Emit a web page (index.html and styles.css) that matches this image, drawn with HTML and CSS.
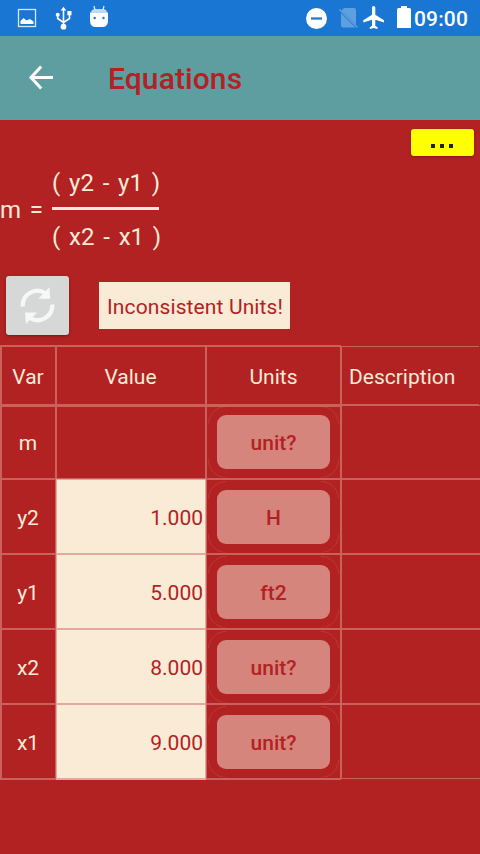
FILE: index.html
```html
<!DOCTYPE html>
<html lang="en">
<head>
<meta charset="utf-8">
<title>Equations</title>
<link rel="stylesheet" href="styles.css">
</head>
<body>
<header class="status">
  <svg class="status-icons" width="120" height="36" viewBox="0 0 120 36">
    <rect x="18.500" y="9.500" width="17" height="17" fill="none" stroke="#d6e7f8" stroke-width="1.300"/>
    <path d="M20.500 24v-3l3-3 3 2.500 3.500-1.500 3.500 2.500v2.500z" fill="#fff"/>
    <g fill="none" stroke="#fff" stroke-width="1.600"><path d="M63.500 10v15M57.700 15v3.500l5.800 4M69.500 14.500v4l-6 4"/></g>
    <path d="M60.700 10.500l2.800-3.800 2.800 3.800zM67.300 11h4.200v4.200h-4.200z" fill="#fff"/>
    <circle cx="57.700" cy="14.700" r="2" fill="#fff"/><circle cx="63.500" cy="26.700" r="2.900" fill="#fff"/>
    <path d="M90 12.500q9-1 18 0v8q0 6.500-5 6.500h-8q-5 0-5-6.500z" fill="#fff"/>
    <path d="M91 13q0-4 4.500-4h7q4.500 0 4.500 4z" fill="#bdd8f3"/>
    <path d="M95 10l-1-4M103 10l1-4" stroke="#e4effa" stroke-width="1.200"/>
    <circle cx="94.700" cy="18" r="1.200" fill="#1976d2"/><circle cx="103.500" cy="18" r="1.200" fill="#1976d2"/>
  </svg>
  <div class="status-right">
    <svg width="112" height="36" viewBox="302 0 112 36">
      <circle cx="316.500" cy="18.500" r="10.500" fill="#fff"/><path d="M311 18.500h11" stroke="#1976d2" stroke-width="2.200"/>
      <path d="M344 8h10q2 0 2 2v15L341.500 10.500zM341 13l14.500 14.500H343q-2 0-2-2z" fill="#5e9fdf"/>
      <path d="M339.500 9.500l18 18" stroke="#5e9fdf" stroke-width="1.400"/>
      <path d="M384 22.400v-2.200l-8.700-5.400v-7.200a1.650 1.650 0 0 0-3.300 0v7.200l-8.700 5.400v2.200l8.700-2.700v6l-2.200 1.600V29l3.850-1.100L377.500 29v-1.700l-2.200-1.600v-6z" fill="#fff"/>
      <path d="M398.500 8h2.500V6h6v2h2.500q1.500 0 1.500 1.500V28h-14V9.500q0-1.500 1.500-1.500z" fill="#fff"/>
    </svg>
    <span class="clock">09:00</span>
  </div>
</header>
<div class="appbar">
  <svg class="back" width="26" height="26" viewBox="0 0 26 26"><path d="M13.200 1.500L3 12.500l10.200 11M3 12.500H25" fill="none" stroke="#fff" stroke-width="3"/></svg>
  <h1>Equations</h1>
</div>
<main>
  <div class="menu-row">
    <button class="more"><i></i><i></i><i></i></button>
  </div>
  <div class="equation">
    <span class="lhs">m&nbsp; =</span>
    <div class="fraction">
      <span class="top">(&nbsp; y2 &nbsp;-&nbsp; y1 &nbsp;)</span>
      <span class="bottom">(&nbsp; x2 &nbsp;-&nbsp; x1 &nbsp;)</span>
    </div>
  </div>
  <div class="actions">
    <button class="refresh">
      <svg width="36" height="38" viewBox="20 286.500 36 38">
        <path d="M22.800 306A14.600 14.600 0 0 1 45 292.500M52.200 304A14.600 14.600 0 0 1 30 317.500" fill="none" stroke="#f7f7f7" stroke-width="4.300"/>
        <path d="M49.500 286.700l.7 11.500H38.300zM25 312h12l-11 11.500z" fill="#f7f7f7"/>
      </svg>
    </button>
    <span class="message">Inconsistent Units!</span>
  </div>
  <div class="table">
    <div class="row head"><div>Var</div><div>Value</div><div>Units</div><div class="desc">Description</div></div>
    <div class="row first"><div>m</div><div></div><div><button class="unit">unit?</button></div><div class="desc"></div></div>
    <div class="row"><div>y2</div><div class="value">1.000</div><div><button class="unit">H</button></div><div class="desc"></div></div>
    <div class="row"><div>y1</div><div class="value">5.000</div><div><button class="unit">ft2</button></div><div class="desc"></div></div>
    <div class="row"><div>x2</div><div class="value">8.000</div><div><button class="unit">unit?</button></div><div class="desc"></div></div>
    <div class="row last"><div>x1</div><div class="value">9.000</div><div><button class="unit">unit?</button></div><div class="desc"></div></div>
  </div>
</main>
</body>
</html>
```
FILE: styles.css
```css
* { box-sizing: border-box; }
body {
  margin: 0;
  height: 854px;
  overflow: hidden;
  background: #b22222;
  color: #faebd7;
  font: 21px/25px Roboto, sans-serif;
}
button { border: 0; padding: 0; font: inherit; color: inherit; }
svg { display: block; flex: none; }
.status { display: flex; justify-content: space-between; height: 36px; background: #1976d2; color: #fff; }
.status-right { display: flex; width: 178px; }
.clock { font-size: 21px; font-weight: 500; line-height: 38px; letter-spacing: .15px; }
.appbar { display: flex; align-items: center; height: 84px; padding-left: 28px; background: #5f9ea0; }
.appbar h1 { margin: 2px 0 0 54px; font-size: 30px; line-height: 36px; font-weight: 500; letter-spacing: .1px; color: #b22222; }
.menu-row { display: flex; justify-content: flex-end; padding: 9px 6px 0; height: 47px; }
.more {
  display: flex; justify-content: center; align-items: flex-start; gap: 5px;
  width: 63px; height: 27px; padding: 15px 1px 0 0;
  background: #ff0; border-radius: 3px; box-shadow: 0 1px 3px rgba(0,0,0,.25);
}
.more i { width: 4px; height: 4px; background: #222200; }
.equation { display: flex; height: 109px; font-size: 24px; word-spacing: -1.55px; }
.lhs { width: 52px; padding-top: 31px; white-space: nowrap; }
.fraction { display: flex; flex-direction: column; align-items: flex-start; white-space: nowrap; }
.top { width: 107px; height: 43px; padding-top: 4px; border-bottom: 3px solid #faebd7; }
.bottom { padding-top: 15px; }
.actions { display: flex; height: 69px; padding-left: 6px; gap: 30px; }
.refresh {
  display: flex; align-items: center; justify-content: center;
  width: 63px; height: 59px; border-radius: 3px;
  background: #d6d7d7; box-shadow: 0 1px 3px rgba(0,0,0,.35);
}
.message { width: 191px; height: 47px; margin-top: 6px; padding: 13px 8px; background: #faebd7; color: #b22222; white-space: nowrap; letter-spacing: .12px; }
.row { display: grid; grid-template-columns: 56px 150px 135px 139px; height: 75px; }
.row > div {
  display: flex; align-items: center; justify-content: center;
  padding: 3px 1px 0 0;
  border: 1px solid rgba(214,133,124,.65);
}
.row > div:first-child { border-left-width: 2px; }
.row > div:nth-child(3) { padding: 0; }
.row > .desc { border-right: 0; }
.row > .value { justify-content: flex-end; padding-right: 2px; background: #faebd7; color: #b22222; }
.row.head { height: 60px; }
.row.head > div { border-top-width: 2px; padding-top: 3px; }
.row.head > .desc { justify-content: flex-start; padding-left: 7px; margin: 1px 1px 0 0; border-top-width: 1px; }
.row.first { height: 74px; }
.first > div:not(.desc) { border-top-width: 2px; }
.row.first > div:first-child { padding-top: 1px; }
.row.first > div:nth-child(3) { padding-bottom: 2px; }
.row.last { height: 76px; }
.last > div { border-bottom-width: 2px; }
.last > .desc { margin-bottom: 1px; border-bottom-width: 1px; }
.unit {
  position: relative; width: 113px; height: 54px; padding-top: 4px; border-radius: 9px;
  background: #d6857c; color: #b22222; font-weight: 500;
}
.unit::before, .unit::after {
  content: ""; position: absolute; inset: -9px; border: 1px solid rgba(214,133,124,.24); border-radius: 18px;
  clip-path: polygon(0 0,18px 0,18px 18px,0 18px,0 calc(100% - 18px),18px calc(100% - 18px),18px 100%,0 100%);
}
.unit::after { transform: scaleX(-1); }
```
